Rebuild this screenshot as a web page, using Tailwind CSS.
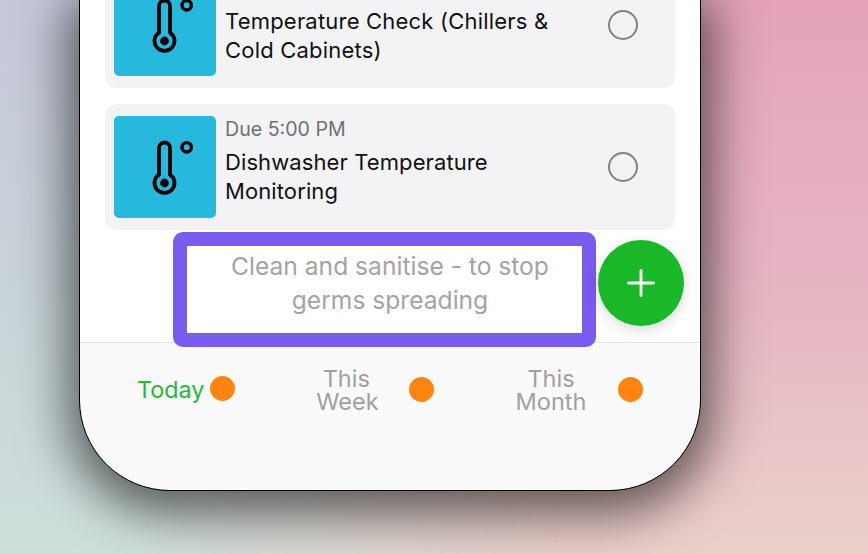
<!DOCTYPE html>
<html>
<head>
<meta charset="utf-8">
<script src="https://cdn.jsdelivr.net/npm/@tailwindcss/browser@4"></script>
</head>
<body class="m-0 overflow-hidden">
<div class="relative w-[868px] h-[554px] overflow-hidden font-['Inter','Liberation_Sans',sans-serif] bg-[linear-gradient(180deg,#e4a3bb_0%,#e6b4c2_50%,#ebd0ca_100%)]">
  <div class="absolute inset-0 bg-[linear-gradient(180deg,#c7c8da_0%,#c8d3d8_50%,#cfe0dc_100%)] [mask-image:linear-gradient(90deg,#000_15%,transparent_65%)]"></div>

  <div class="relative w-[620px] h-[490px] ml-[80px] flex flex-col bg-white rounded-b-[90px] shadow-[0_12px_50px_12px_rgba(0,0,0,0.58)] outline outline-1 outline-black overflow-hidden">
    <div class="flex-1 flex flex-col justify-end gap-4 px-[25px] pb-[112px] min-h-0">
      <div class="shrink-0 flex items-center h-[126px] rounded-[12px] bg-[#f3f3f6] pl-[9px]">
        <div class="w-[102px] h-[102px] rounded-[5px] bg-[#26b9dd] shrink-0">
          <svg width="102" height="102" viewBox="0 0 102 102" fill="none" stroke="#000" stroke-width="3.8"><path d="M56 58.6V32a5.5 5.5 0 0 0-11 0v26.6a10 10 0 1 0 11 0Z"/><circle cx="50.5" cy="67" r="4.4" fill="#000" stroke="none"/><circle cx="72.7" cy="31.3" r="4.7" stroke-width="3.4"/></svg>
        </div>
        <p class="ml-[9px] w-[361px] text-[22px] tracking-[0.2px] leading-[29px] text-[#111] mt-[22px]">Temperature Check (Chillers &amp; Cold Cabinets)</p>
        <div class="ml-[22px] w-[30px] h-[30px] rounded-full border-2 border-[#808080] shrink-0"></div>
      </div>
      <div class="shrink-0 flex items-center h-[126px] rounded-[12px] bg-[#f3f3f6] pl-[9px]">
        <div class="w-[102px] h-[102px] rounded-[5px] bg-[#26b9dd] shrink-0">
          <svg width="102" height="102" viewBox="0 0 102 102" fill="none" stroke="#000" stroke-width="3.8"><path d="M56 58.6V32a5.5 5.5 0 0 0-11 0v26.6a10 10 0 1 0 11 0Z"/><circle cx="50.5" cy="67" r="4.4" fill="#000" stroke="none"/><circle cx="72.7" cy="31.3" r="4.7" stroke-width="3.4"/></svg>
        </div>
        <div class="ml-[9px] w-[361px] -mt-[13px]">
          <p class="text-[19.6px] leading-[26px] text-[#707070] mb-[6px]">Due 5:00 PM</p>
          <p class="text-[22px] tracking-[0.1px] leading-[29px] text-[#111]">Dishwasher Temperature Monitoring</p>
        </div>
        <div class="ml-[22px] w-[30px] h-[30px] rounded-full border-2 border-[#808080] shrink-0"></div>
      </div>
    </div>
    <div class="h-[148px] shrink-0 bg-[#fafafa] border-t border-[#e2e2e2] flex items-start pt-[35px] px-[57px]">
      <div class="flex items-center h-[24px] mt-[-1px] w-[194px]">
        <span class="text-[23.3px] leading-[23px] text-[#25b83c]">Today</span>
        <span class="ml-[6px] mb-[2px] w-[25px] h-[25px] rounded-full bg-[#ff8510]"></span>
      </div>
      <div class="flex items-center h-[24px] w-[215px]">
        <span class="w-[60px] text-[23.5px] leading-[23px] text-[#a0a0a0] text-center">This Week</span>
        <span class="ml-[33px] mb-[2px] w-[25px] h-[25px] rounded-full bg-[#ff8510]"></span>
      </div>
      <div class="flex items-center h-[24px]">
        <span class="w-[72px] text-[23.5px] leading-[23px] text-[#a0a0a0] text-center">This Month</span>
        <span class="ml-[31px] mb-[2px] w-[25px] h-[25px] rounded-full bg-[#ff8510]"></span>
      </div>
    </div>
  </div>

  <div class="absolute left-[173px] top-[232px] w-[423px] h-[115px] rounded-[10px] border-[14px] border-[#775cee] bg-white flex items-center justify-center text-center text-[24.6px] leading-[34px] text-[#a3a3a3]">
    <p class="-mt-[14px] ml-[11px]">Clean and sanitise - to stop<br>germs spreading</p>
  </div>
  <div class="absolute left-[598px] top-[240px] w-[86px] h-[86px] rounded-full bg-[#19b829] shadow-[0_4px_14px_rgba(0,0,0,0.15)] flex items-center justify-center">
    <svg width="30" height="30" viewBox="0 0 30 30" stroke="#fff" stroke-width="2.8" stroke-linecap="round"><path d="M15 2.5v25M2.5 15h25"/></svg>
  </div>
</div>
</body>
</html>
